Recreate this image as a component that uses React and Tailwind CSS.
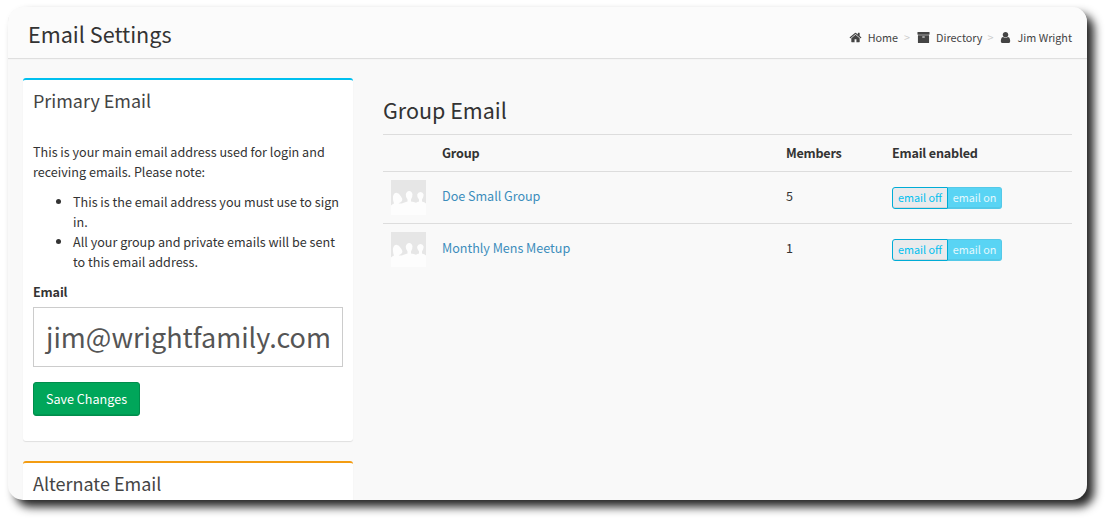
const ICONS = {
  home: 'M1472 992v480q0 26-19 45t-45 19h-384v-384h-256v384h-384q-26 0-45-19t-19-45v-480q0-1 .5-3t.5-3l575-474 575 474q1 2 1 6zm223-69l-62 74q-8 9-21 11h-3q-13 0-21-7l-692-577-692 577q-12 8-24 7-13-2-21-11l-62-74q-8-10-7-23.5t11-21.5l719-599q32-26 76-26t76 26l244 204v-195q0-14 9-23t23-9h192q14 0 23 9t9 23v408l219 182q10 8 11 21.5t-7 23.5z',
  archive: 'M1088 832q0-26-19-45t-45-19h-256q-26 0-45 19t-19 45 19 45 45 19h256q26 0 45-19t19-45zm576-192v960q0 26-19 45t-45 19h-1408q-26 0-45-19t-19-45v-960q0-26 19-45t45-19h1408q26 0 45 19t19 45zm64-448v256q0 26-19 45t-45 19h-1536q-26 0-45-19t-19-45v-256q0-26 19-45t45-19h1536q26 0 45 19t19 45z',
  user: 'M1536 1399q0 109-62.5 187t-150.5 78h-854q-88 0-150.5-78t-62.5-187q0-85 8.5-160.5t31.5-152 58.5-131 94-89 134.5-34.5q131 128 313 128t313-128q76 0 134.5 34.5t94 89 58.5 131 31.5 152 8.5 160.5zm-256-887q0 159-112.5 271.5t-271.5 112.5-271.5-112.5-112.5-271.5 112.5-271.5 271.5-112.5 271.5 112.5 112.5 271.5z',
};

function Icon({ name, className }) {
  return (
    <svg viewBox="0 0 1792 1792" fill="currentColor" className={className}>
      <path d={ICONS[name]} />
    </svg>
  );
}

function GroupAvatar() {
  return (
    <svg viewBox="0 0 35 35" className="block size-[35px]">
      <rect width="35" height="35" fill="#e6e6e6" />
      <path
        fill="#fdfdfd"
        d="M0 35V25.500Q1.500 24 3 23.500Q1.600 20 2 16.500Q2.600 13 5.500 12.800Q8 13 10 16.500Q12 19 11 21Q9.500 23 7.500 23.300Q10 24 12 23Q14 22 16.500 21.500V19.500Q14.600 17 14.800 14.500Q15.500 11 18.200 11Q21 11 21.500 14.500Q21.500 17 20 19.500V21.500Q23 22 25 22.800Q26.500 22 28 21.500V19.500Q25.800 17 26.200 14.500Q27 12 29.500 12Q32 12 32.600 14.500Q32.800 17 31 19.500V21.500Q33.500 22 35 23.500V35Z"
      />
    </svg>
  );
}

function EmailToggle() {
  return (
    <div className="flex h-[22px] w-[110px] text-[10.8px] leading-[18px]">
      <button className="w-14 rounded-l-[3px] border border-[#00acd6] bg-[#eaeaec] pb-[2px] text-center text-[#00c0ef] shadow-[inset_0_-1px_0_rgba(0,0,0,0.09)]">
        email off
      </button>
      <button className="w-[54px] rounded-r-[3px] border border-l-0 border-[#54c9e8] bg-[#59d4f4] pb-[2px] text-center text-[#e3f8fd] shadow-[inset_0_-1px_0_rgba(0,0,0,0.05)]">
        email on
      </button>
    </div>
  );
}

const GROUPS = [
  { name: 'Doe Small Group', members: 5 },
  { name: 'Monthly Mens Meetup', members: 1 },
];

const COLUMNS = 'grid grid-cols-[51px_344px_106px_188px] border-t border-[#dddddd]';

export default function App() {
  return (
    <div className="h-[523px] w-[1110px] overflow-hidden bg-white pt-[7px] pl-2 font-['Noto_Sans_CJK_SC',sans-serif] text-[12.6px] leading-5 text-[#333333]">
      <div className="flex h-[493px] w-[1079px] flex-col overflow-hidden rounded-[15px] bg-[#f9f9f9] shadow-[7px_7px_10px_0px_rgba(0,0,0,0.85)]">
        <header className="flex h-[51px] shrink-0 items-center justify-between bg-[#fbfbfb] pr-[15px] pl-5 shadow-[0_1px_1px_rgba(0,0,0,0.1)]">
          <h1 className="pt-[3px] text-[21.6px] leading-[26px]">Email Settings</h1>
          <nav className="flex items-center pt-[9px] text-[10.8px] leading-4 text-[#444444]">
            <Icon name="home" className="mr-[6px] size-[13px]" />
            <span>Home</span>
            <span className="mr-[7px] ml-[6px] text-[#cccccc]">&gt;</span>
            <Icon name="archive" className="mr-[6px] size-[13px]" />
            <span>Directory</span>
            <span className="mr-[6px] ml-[5px] text-[#cccccc]">&gt;</span>
            <Icon name="user" className="mr-[5px] size-[13px]" />
            <span>Jim Wright</span>
          </nav>
        </header>
        <main className="flex items-start gap-[30px] pt-5 pl-[15px]">
          <div className="flex w-[330px] flex-col gap-5">
            <section className="h-[363px] rounded-[3px] border-t-2 border-[#00c0ef] bg-white px-[10px] shadow-[0_1px_1px_rgba(0,0,0,0.1)]">
              <h3 className="pt-2 text-[17.95px] leading-[24px] text-[#444444]">Primary Email</h3>
              <p className="mt-[30px]">This is your main email address used for login and receiving emails. Please note:</p>
              <ul className="mt-[10px] list-disc pl-10">
                <li>This is the email address you must use to sign in.</li>
                <li>All your group and private emails will be sent to this email address.</li>
              </ul>
              <label className="mt-[10px] block font-bold tracking-[-0.15px]">Email</label>
              <div className="mt-[5px] h-[60px] border border-[#cccccc] bg-white pl-3 text-[27px] leading-[58px] text-[#555555]">
                jim@wrightfamily.com
              </div>
              <button className="mt-[15px] block h-[34px] w-[107px] rounded-[3px] border border-[#008d4c] bg-[#00a65a] text-center text-white shadow-[inset_0_-1px_0_rgba(0,0,0,0.09)]">
                Save Changes
              </button>
            </section>
            <section className="h-[100px] rounded-[3px] border-t-2 border-[#f39c12] bg-white px-[10px] shadow-[0_1px_1px_rgba(0,0,0,0.1)]">
              <h3 className="pt-2 text-[18px] leading-[24px] text-[#444444]">Alternate Email</h3>
            </section>
          </div>
          <div className="w-[689px]">
            <h2 className="pt-[19px] pb-[11px] text-[21.5px] leading-[26px]">Group Email</h2>
            <div className={COLUMNS}>
              <div />
              <div className="px-2 py-2 font-bold tracking-[-0.2px]">Group</div>
              <div className="px-2 py-2 font-bold tracking-[-0.25px]">Members</div>
              <div className="px-2 py-2 font-bold tracking-[-0.2px]">Email enabled</div>
            </div>
            {GROUPS.map((group) => (
              <div key={group.name} className={COLUMNS}>
                <div className="h-[51px] py-2 pl-2">
                  <GroupAvatar />
                </div>
                <a className="px-2 pt-[14px] tracking-[-0.03px] text-[#3c8dbc]">{group.name}</a>
                <div className="px-2 pt-[14px]">{group.members}</div>
                <div className="px-2 pt-[15px]">
                  <EmailToggle />
                </div>
              </div>
            ))}
          </div>
        </main>
      </div>
    </div>
  );
}
